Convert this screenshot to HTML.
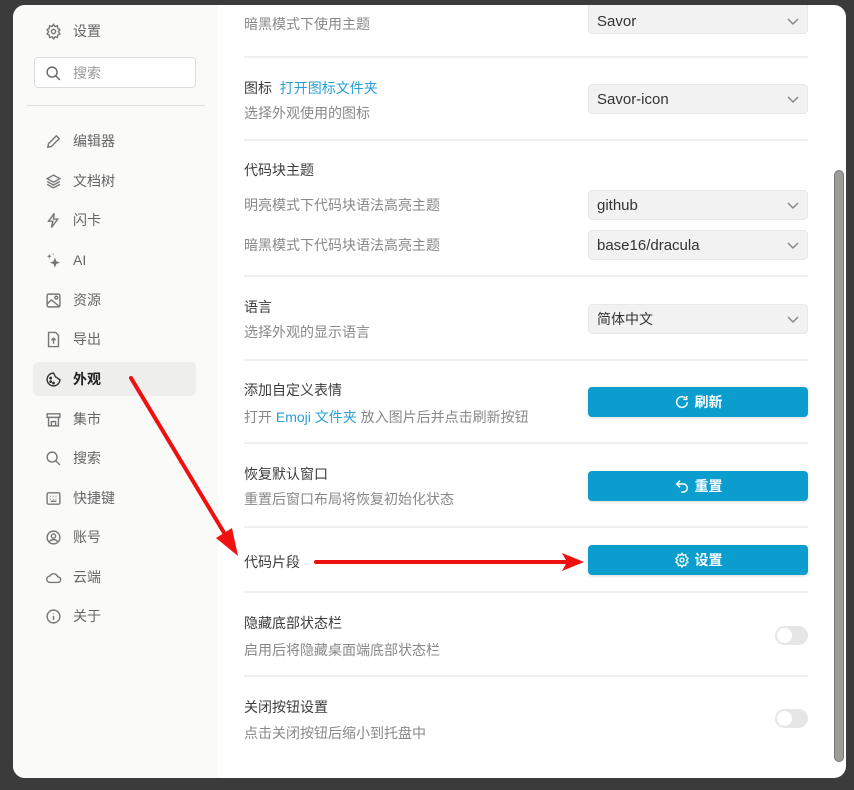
<!DOCTYPE html>
<html><head><meta charset="utf-8"><style>
*{margin:0;padding:0;box-sizing:border-box}
body{width:854px;height:790px;overflow:hidden;background:#3b3b3b;font-family:"Liberation Sans","Noto Sans CJK SC",sans-serif;font-size:14px;position:relative}
.modal{position:absolute;left:13px;top:5px;width:833px;height:773px;background:#fff;border-radius:12px;overflow:hidden}
.side{position:absolute;left:0;top:0;width:205px;height:100%;background:#fafaf9}
.a{position:absolute;white-space:nowrap}
.t{color:#3c3c3c}
.d{color:#888}
.l{color:#2a9fd6}
.hr{position:absolute;left:231px;width:564px;height:2px;background:#f0f0f0}
.sel{position:absolute;left:575px;width:220px;height:30px;background:#f2f2f2;border:1px solid #e8e8e8;border-radius:4px;color:#333;font-size:15px;padding:0 0 0 8px;display:flex;align-items:center}
.sel svg{position:absolute;right:8px;top:11px}
.btn{position:absolute;left:575px;width:220px;height:30px;background:#0a9dce;border-radius:4px;color:#fff;font-weight:bold;font-size:14px;display:flex;align-items:center;justify-content:center;gap:5px;box-shadow:0 1px 3px rgba(0,0,0,.15)}
.tg{position:absolute;left:762px;width:33px;height:19px;border-radius:10px;background:#e6e6e6}
.tg:after{content:"";position:absolute;left:2px;top:2px;width:15px;height:15px;border-radius:50%;background:#fff}
.it{position:absolute;left:20px;width:163px;height:34px;display:flex;align-items:center;color:#666;font-size:14px}
.it svg{margin:0 11px 0 12px;flex:none}
</style></head><body>
<div class="modal">
 <div class="side">
  <div class="it" style="top:9px"><svg width="17" height="17" viewBox="0 0 24 24" fill="none" stroke="#777" stroke-width="2"><circle cx="12" cy="12" r="3"/><path d="M12 2l2 3 3.5-1 .5 3.5 3 2-2 3 2 3-3 1.5-.5 3.5-3.5-1-2 3-2-3-3.5 1-.5-3.5-3-1.5 2-3-2-3 3-2 .5-3.5 3.5 1z"/></svg>设置</div>
  <div class="a" style="left:21px;top:52px;width:162px;height:31px;border:1px solid #ddd;border-radius:4px;background:#fff"></div>
  <div class="it" style="top:51px"><svg width="17" height="17" viewBox="0 0 24 24" fill="none" stroke="#666" stroke-width="2"><circle cx="10" cy="10" r="7"/><path d="M15 15l6 6"/></svg><span style="color:#999">搜索</span></div>
  <div class="a" style="left:13px;top:100px;width:179px;height:1px;background:#e2e2e2"></div>
  <div class="it" style="top:119px"><svg width="17" height="17" viewBox="0 0 24 24" fill="none" stroke="#777" stroke-width="2"><path d="M4 20l1-5L16 4l4 4L9 19z"/></svg>编辑器</div>
  <div class="it" style="top:159px"><svg width="17" height="17" viewBox="0 0 24 24" fill="none" stroke="#777" stroke-width="2"><path d="M12 3l9 5-9 5-9-5z M3 12l9 5 9-5 M3 16l9 5 9-5"/></svg>文档树</div>
  <div class="it" style="top:198px"><svg width="17" height="17" viewBox="0 0 24 24" fill="none" stroke="#777" stroke-width="2"><path d="M13 2L5 13h6l-2 9 9-12h-6z"/></svg>闪卡</div>
  <div class="it" style="top:238px"><svg width="17" height="17" viewBox="0 0 24 24" fill="#777"><path d="M14 8l2 5 5 2-5 2-2 5-2-5-5-2 5-2z M6 3l1 2 2 1-2 1-1 2-1-2-2-1 2-1z M11 2h1v2h-1z"/></svg>AI</div>
  <div class="it" style="top:278px"><svg width="17" height="17" viewBox="0 0 24 24" fill="none" stroke="#777" stroke-width="2"><rect x="3" y="3" width="18" height="18" rx="2"/><path d="M3 17l6-6 12 10"/><circle cx="16" cy="8" r="2"/></svg>资源</div>
  <div class="it" style="top:317px"><svg width="17" height="17" viewBox="0 0 24 24" fill="none" stroke="#777" stroke-width="2"><path d="M5 2h10l4 4v16H5z M12 18v-7 M9 13l3-3 3 3"/></svg>导出</div>
  <div class="it" style="top:357px;background:#eeeeed;border-radius:5px;color:#222;font-weight:bold"><svg width="17" height="17" viewBox="0 0 24 24" fill="none" stroke="#333" stroke-width="2"><path d="M12 3a9 9 0 1 0 9 9c-3 0-3-3-5-3-2 0-3-6-4-6z"/><circle cx="8" cy="10" r="1"/><circle cx="8" cy="15" r="1"/><circle cx="12" cy="17" r="1"/></svg>外观</div>
  <div class="it" style="top:397px"><svg width="17" height="17" viewBox="0 0 24 24" fill="none" stroke="#777" stroke-width="2"><path d="M3 4h18v5H3z M5 9v12h14V9 M9 21v-6h6v6"/></svg>集市</div>
  <div class="it" style="top:436px"><svg width="17" height="17" viewBox="0 0 24 24" fill="none" stroke="#777" stroke-width="2"><circle cx="10" cy="10" r="7"/><path d="M15 15l6 6"/></svg>搜索</div>
  <div class="it" style="top:476px"><svg width="17" height="17" viewBox="0 0 24 24" fill="none" stroke="#777" stroke-width="2"><rect x="3" y="4" width="18" height="16" rx="2"/><path d="M7 9h1M11 9h1M15 9h1M7 13h1M11 13h1M15 13h1M8 16h8"/></svg>快捷键</div>
  <div class="it" style="top:515px"><svg width="17" height="17" viewBox="0 0 24 24" fill="none" stroke="#777" stroke-width="2"><circle cx="12" cy="12" r="9"/><circle cx="12" cy="10" r="3"/><path d="M6 18c3-4 9-4 12 0"/></svg>账号</div>
  <div class="it" style="top:555px"><svg width="17" height="17" viewBox="0 0 24 24" fill="none" stroke="#777" stroke-width="2"><path d="M7 19h11a4 4 0 0 0 0-8 6 6 0 0 0-11-1 4.5 4.5 0 0 0 0 9z"/></svg>云端</div>
  <div class="it" style="top:594px"><svg width="17" height="17" viewBox="0 0 24 24" fill="none" stroke="#777" stroke-width="2"><circle cx="12" cy="12" r="9"/><path d="M12 11v6M12 7v1"/></svg>关于</div>
 </div>

 <div class="a d" style="left:231px;top:9px">暗黑模式下使用主题</div>
 <div class="sel" style="top:-5px;height:34px;padding-top:8px">Savor<svg width="12" height="8" viewBox="0 0 12 8" fill="none" stroke="#888" stroke-width="1.5" style="top:17px"><path d="M1 1l5 5 5-5"/></svg></div>
 <div class="hr" style="top:51px"></div>

 <div class="a t" style="left:231px;top:73px">图标 <span class="l">&nbsp;打开图标文件夹</span></div>
 <div class="a d" style="left:231px;top:98px">选择外观使用的图标</div>
 <div class="sel" style="top:79px">Savor-icon<svg width="12" height="8" viewBox="0 0 12 8" fill="none" stroke="#888" stroke-width="1.5"><path d="M1 1l5 5 5-5"/></svg></div>
 <div class="hr" style="top:134px"></div>

 <div class="a t" style="left:231px;top:155px">代码块主题</div>
 <div class="a d" style="left:231px;top:190px">明亮模式下代码块语法高亮主题</div>
 <div class="sel" style="top:185px">github<svg width="12" height="8" viewBox="0 0 12 8" fill="none" stroke="#888" stroke-width="1.5"><path d="M1 1l5 5 5-5"/></svg></div>
 <div class="a d" style="left:231px;top:230px">暗黑模式下代码块语法高亮主题</div>
 <div class="sel" style="top:225px">base16/dracula<svg width="12" height="8" viewBox="0 0 12 8" fill="none" stroke="#888" stroke-width="1.5"><path d="M1 1l5 5 5-5"/></svg></div>
 <div class="hr" style="top:270px"></div>

 <div class="a t" style="left:231px;top:292px">语言</div>
 <div class="a d" style="left:231px;top:317px">选择外观的显示语言</div>
 <div class="sel" style="top:299px;font-size:14px">简体中文<svg width="12" height="8" viewBox="0 0 12 8" fill="none" stroke="#888" stroke-width="1.5"><path d="M1 1l5 5 5-5"/></svg></div>
 <div class="hr" style="top:354px"></div>

 <div class="a t" style="left:231px;top:375px">添加自定义表情</div>
 <div class="a d" style="left:231px;top:402px">打开 <span class="l">Emoji 文件夹</span> 放入图片后并点击刷新按钮</div>
 <div class="btn" style="top:382px"><svg width="16" height="16" viewBox="0 0 24 24" fill="none" stroke="#fff" stroke-width="2.2"><path d="M20 12a8 8 0 1 1-3-6.2 M19 3v5h-5"/></svg>刷新</div>
 <div class="hr" style="top:437px"></div>

 <div class="a t" style="left:231px;top:459px">恢复默认窗口</div>
 <div class="a d" style="left:231px;top:484px">重置后窗口布局将恢复初始化状态</div>
 <div class="btn" style="top:466px"><svg width="16" height="16" viewBox="0 0 24 24" fill="none" stroke="#fff" stroke-width="2.2"><path d="M9 4L4 9l5 5 M4 9h10a6 6 0 0 1 0 12h-3"/></svg>重置</div>
 <div class="hr" style="top:521px"></div>

 <div class="a t" style="left:231px;top:547px">代码片段</div>
 <div class="btn" style="top:540px"><svg width="16" height="16" viewBox="0 0 24 24" fill="none" stroke="#fff" stroke-width="2"><circle cx="12" cy="12" r="3"/><path d="M12 2l2 3 3.5-1 .5 3.5 3 2-2 3 2 3-3 1.5-.5 3.5-3.5-1-2 3-2-3-3.5 1-.5-3.5-3-1.5 2-3-2-3 3-2 .5-3.5 3.5 1z"/></svg>设置</div>
 <div class="hr" style="top:586px"></div>

 <div class="a t" style="left:231px;top:608px">隐藏底部状态栏</div>
 <div class="a d" style="left:231px;top:635px">启用后将隐藏桌面端底部状态栏</div>
 <div class="tg" style="top:621px"></div>
 <div class="hr" style="top:670px"></div>

 <div class="a t" style="left:231px;top:692px">关闭按钮设置</div>
 <div class="a d" style="left:231px;top:718px">点击关闭按钮后缩小到托盘中</div>
 <div class="tg" style="top:704px"></div>

 <div class="a" style="left:821px;top:165px;width:10px;height:592px;background:#9e9c98;border:1px solid #777;border-radius:5px"></div>
</div>

<svg width="854" height="790" style="position:absolute;left:0;top:0" viewBox="0 0 854 790">
 <line x1="131" y1="378" x2="226" y2="536" stroke="#f01010" stroke-width="4" stroke-linecap="round"/>
 <polygon points="238,556 216,538 232,528" fill="#f01010"/>
 <line x1="316" y1="562" x2="565" y2="562" stroke="#f01010" stroke-width="4" stroke-linecap="round"/>
 <polygon points="584,562 562,553 567,562 562,571" fill="#f01010"/>
</svg>
</body></html>
